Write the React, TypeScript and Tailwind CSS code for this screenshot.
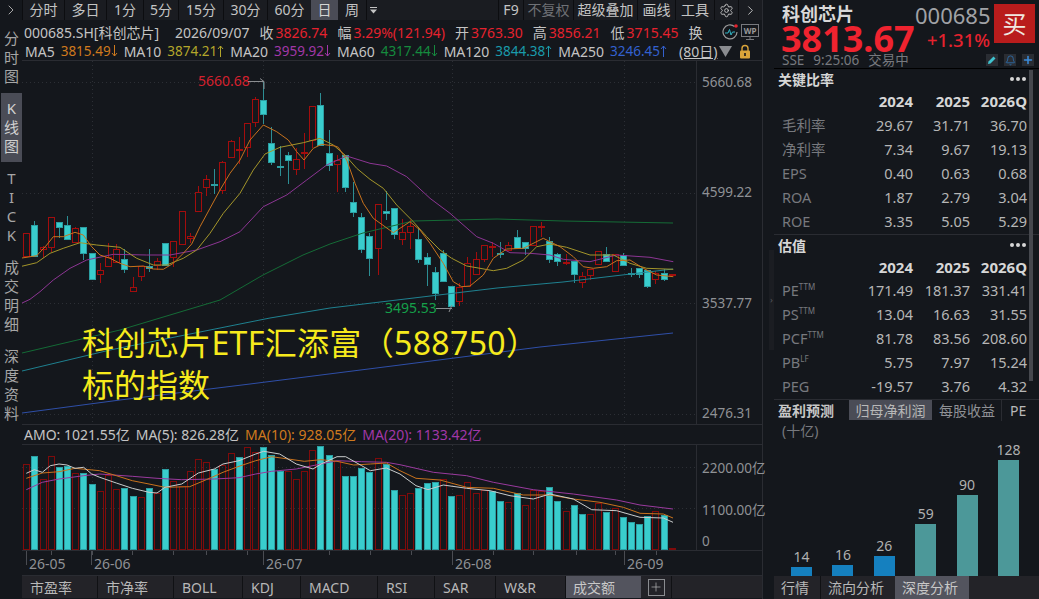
import React from 'react';
import { ChevronRight, Settings, Bell, Plus } from 'lucide-react';

type Candle = [number, number, number, number, number]; // dir (1 up / 0 down), body top, body bottom, wick top, wick bottom
type Pt = [number, number];

const candles: Candle[] = [
  [1,233,256,233,256],[0,225,256,221,256],[1,247,249,246,258],[1,217,247,217,252],[0,222,227,222,238],
  [0,225,239,216,240],[1,228,242,227,242],[0,227,253,227,260],[0,253,279,253,279],[1,270,274,263,283],
  [1,257,266,243,266],[1,249,262,244,262],[0,259,269,249,273],[1,287,291,277,291],[1,266,276,266,281],
  [0,266,268,249,272],[1,261,265,258,270],[0,243,265,243,265],[1,241,257,241,267],[1,211,244,211,244],
  [1,236,238,233,243],[1,192,211,186,211],[1,179,187,175,196],[0,184,185,169,194],[1,162,190,161,194],
  [1,141,157,140,158],[1,149,150,137,164],[1,123,147,123,157],[1,99,122,97,127],[0,100,114,81,124],
  [0,143,162,127,165],[0,166,167,146,176],[0,155,160,152,184],[1,159,169,148,175],[1,152,153,133,169],
  [1,106,140,106,148],[0,105,145,93,145],[0,153,165,130,171],[1,160,164,155,192],[0,155,187,155,192],
  [0,202,212,182,217],[0,217,249,213,253],[0,236,258,233,276],[1,204,248,204,275],[0,211,213,191,220],
  [0,208,234,208,239],[1,232,239,219,245],[1,226,232,220,249],[0,239,259,228,263],[0,257,264,253,286],
  [0,272,293,267,300],[0,253,281,250,281],[0,286,306,286,306],[1,287,301,283,306],[1,263,286,257,286],
  [1,259,274,252,274],[1,245,259,245,262],[1,246,247,242,257],[0,253,254,242,258],[1,245,250,242,250],
  [0,237,248,230,248],[0,242,248,242,255],[1,226,245,226,245],[1,226,227,222,237],[0,241,259,237,263],
  [0,254,261,253,266],[1,262,263,254,265],[0,261,274,261,283],[1,276,282,272,288],[1,269,275,269,280],
  [1,251,264,251,264],[0,254,261,247,262],[1,254,271,254,271],[0,255,265,253,266],[0,273,274,268,277],
  [0,268,274,268,278],[0,270,286,270,288],[1,273,279,271,284],[0,273,279,269,281],[1,274,275,274,275],
];

// volume bars: [dir, top y in chart]
const volumes: [number, number][] = ([
  [1,135],[0,110],[1,180],[1,110],[0,143],[0,140],[1,163],[0,162],[0,195],[1,216],[1,168],[1,210],[0,208],[0,232],[1,233],[0,208],
  [1,222],[0,150],[1,185],[1,200],[1,157],[1,120],[1,130],[0,150],[1,138],[1,102],[0,115],[1,85],[1,100],[0,84],[0,108],[0,157],
  [1,155],[1,180],[1,157],[1,94],[0,82],[0,107],[1,125],[0,172],[0,170],[0,147],[0,158],[1,118],[0,135],[0,212],[1,228],[1,222],
  [0,207],[0,193],[0,190],[1,180],[0,232],[1,228],[1,190],[1,222],[1,213],[0,215],[0,247],[1,250],[0,222],[1,257],[1,212],[1,215],
  [0,205],[0,247],[1,277],[0,259],[0,285],[1,286],[1,252],[0,279],[1,268],[0,295],[0,309],[0,315],[0,292],[1,275],[0,287],[1,386],
] as [number, number][]).map(([d, y]) => [d, 420 + y / 3]);

const cx = (i: number) => Math.round(26.3 + 8.17 * i);

// the lines were read off 3x crops, so convert back here
const conv = (pts: Pt[], ox: number, oy: number): Pt[] => pts.map(([x, y]) => [ox + x / 3, oy + y / 3]);
const toStr = (pts: Pt[]) => pts.map(([x, y]) => `${x.toFixed(1)},${y.toFixed(1)}`).join(' ');

const ma5 = [
  ...conv([[0,505],[50,497],[80,465],[100,440],[130,440],[165,427],[190,435],[215,470],[240,495],[270,505],[300,520],[330,530],[370,528],[400,537],[430,538],[460,520],[490,490],[515,462],[540,410],[570,355],[600,300],[630,250],[660,210],[690,150],[730,105],[770,125],[805,150],[830,185],[852,210],[880,175],[905,163],[945,168]], 20, 90),
  ...conv([[25,22],[50,60],[75,130],[100,190],[130,235],[190,278],[240,245],[270,270],[300,310],[340,370],[370,425],[395,440],[420,438],[460,405],[490,355],[530,327],[580,325],[640,295],[690,320],[730,350],[760,380],[790,385],[830,380],[860,362],[900,360],[940,385],[980,405],[1030,410]], 330, 140),
];
const ma10 = [
  ...conv([[0,530],[50,518],[90,490],[130,475],[180,458],[230,465],[300,472],[350,505],[400,525],[440,525],[490,505],[530,480],[570,430],[610,370],[660,310],[700,240],[735,192],[780,172],[850,158],[900,145],[940,165]], 20, 90),
  ...conv([[45,45],[80,85],[120,118],[160,145],[200,195],[250,245],[290,290],[330,330],[365,355],[410,378],[450,385],[490,392],[530,385],[580,360],[620,320],[660,312],[710,322],[780,345],[850,345],[900,370],[950,385],[1030,388]], 330, 140),
];
const ma20 = [
  ...conv([[0,642],[30,628],[60,605],[100,570],[150,535],[200,510],[280,493],[380,495],[450,495],[530,480],[600,455],[660,425],[730,350],[800,315],[860,270],[920,225],[980,198]], 20, 90),
  ...conv([[50,48],[120,70],[170,78],[230,110],[300,175],[360,220],[440,290],[490,310],[540,338],[600,340],[660,345],[700,358],[780,365],[860,345],[960,352],[1030,365]], 330, 140),
];
const ma60: Pt[] = [[22,353],[120,330],[220,300],[263,275],[303,255],[330,244],[363,233],[413,221],[497,219],[563,221],[673,223]];
const ma120: Pt[] = [[22,371],[110,350],[200,332],[270,318],[330,308],[397,300],[497,288],[563,282],[673,269]];
const ma250: Pt[] = [[22,413],[120,400],[250,384],[400,365],[540,347],[673,333]];

const volWhite = [
  ...conv([[79,163],[103,152],[127,160],[151,140],[177,135],[201,138],[225,148],[251,145],[275,165],[299,175],[349,192],[397,208],[447,220],[471,222],[495,205],[545,195],[595,162],[643,150],[669,135],[717,125],[767,105],[791,97],[839,105],[889,135],[939,150],[963,135],[1011,113],[1037,113],[1085,140],[1111,155],[1159,147]], 0, 420),
  ...conv([[0,165],[48,200],[84,212],[130,198],[200,208],[270,215],[330,230],[400,240],[450,225],[520,240],[575,272],[650,275],[720,295],[790,297],[819,310]], 400, 420),
];
const volOrange = [
  ...conv([[79,178],[127,162],[177,158],[225,148],[299,155],[349,170],[397,185],[447,195],[495,205],[569,203],[619,182],[669,160],[717,142],[767,125],[815,113],[865,120],[913,127],[963,122],[1011,127],[1061,138],[1111,135],[1159,132]], 0, 420),
  ...conv([[0,155],[48,178],[120,183],[200,205],[280,208],[370,228],[450,228],[520,240],[600,250],[670,265],[720,283],[790,285],[819,297]], 400, 420),
];
const volPurple = [
  ...conv([[79,212],[127,190],[177,180],[251,170],[299,165],[397,172],[471,178],[545,182],[643,180],[717,176],[767,165],[815,157],[889,150],[963,135],[1011,125],[1085,128],[1159,130]], 0, 420),
  ...conv([[0,137],[100,160],[200,170],[280,190],[400,212],[520,225],[650,243],[720,258],[819,270]], 400, 420),
];

const RED = '#a30d0d';
const CYAN = '#39cdcd';

const PriceChart = () => (
  <svg viewBox="22 61 675 364" width={675} height={364} className="block">
    {[82.5, 193.5, 303.5, 414.5].map((y) => (
      <line key={y} x1={22} x2={697} y1={y} y2={y} stroke="#2c2f35" strokeDasharray="1 3" />
    ))}
    {[92.5, 263.5, 452.5, 624.5].map((x) => (
      <line key={x} x1={x} x2={x} y1={61} y2={425} stroke="#2c2f35" strokeDasharray="1 3" />
    ))}
    {candles.map(([up, top, bottom, hi, lo], i) => {
      const x = cx(i) + 0.5;
      const wick = up ? RED : '#2c8e94';
      return (
        <g key={i}>
          <line x1={x} x2={x} y1={hi} y2={lo} stroke={wick} />
          {up ? (
            <rect x={x - 3} y={top + 0.5} width={6} height={bottom - top} fill="#14171c" stroke={RED} />
          ) : (
            <rect x={x - 3} y={top + 0.5} width={6} height={bottom - top} fill={CYAN} stroke="#2c9ea2" />
          )}
        </g>
      );
    })}
    <polyline points={toStr(ma250)} fill="none" stroke="#2f4fa8" />
    <polyline points={toStr(ma120)} fill="none" stroke="#1f8190" />
    <polyline points={toStr(ma60)} fill="none" stroke="#146b36" />
    <polyline points={toStr(ma20)} fill="none" stroke="#8c3593" />
    <polyline points={toStr(ma10)} fill="none" stroke="#a3952a" />
    <polyline points={toStr(ma5)} fill="none" stroke="#c8721c" />
    <path d="M248 81.5H264M260 78.5L264 81.5V89" fill="none" stroke="#8b8d90" />
    <path d="M436 308.5H452M452 305L449 312" fill="none" stroke="#8b8d90" />
  </svg>
);

const VolumeChart = () => (
  <svg viewBox="22 446 675 106" width={675} height={106} className="block">
    {[468.5, 509.5].map((y) => (
      <line key={y} x1={22} x2={697} y1={y} y2={y} stroke="#2c2f35" strokeDasharray="1 3" />
    ))}
    {[92.5, 263.5, 452.5, 624.5].map((x) => (
      <line key={x} x1={x} x2={x} y1={446} y2={552} stroke="#2c2f35" strokeDasharray="1 3" />
    ))}
    {volumes.map(([up, top], i) => {
      const x = cx(i) + 0.5;
      const y = Math.round(top) + 0.5;
      return up ? (
        <rect key={i} x={x - 3} y={y} width={6} height={550.5 - y} fill="none" stroke="#7f0b0b" />
      ) : (
        <rect key={i} x={x - 3} y={y} width={6} height={550.5 - y} fill={CYAN} stroke="#2c9ea2" />
      );
    })}
    <polyline points={toStr(volPurple)} fill="none" stroke="#9a3a9e" />
    <polyline points={toStr(volOrange)} fill="none" stroke="#c8721c" />
    <polyline points={toStr(volWhite)} fill="none" stroke="#c9cccc" />
  </svg>
);

const toolbarLeft = [
  { t: '分时', w: 'w-[42px]' },
  { t: '多日', w: 'w-[42px]' },
  { t: '1分', w: 'w-[37px]' },
  { t: '5分', w: 'w-[35px]' },
  { t: '15分', w: 'w-[45px]' },
  { t: '30分', w: 'w-[44px]' },
  { t: '60分', w: 'w-[44px]' },
];

const toolbarRight = [
  { t: 'F9', w: 'w-[25px]', c: 'text-[#c4c4c4]' },
  { t: '不复权', w: 'w-[50px]', c: 'text-[#6f7176]' },
  { t: '超级叠加', w: 'w-[64px]', c: 'text-[#c4c4c4]' },
  { t: '画线', w: 'w-[38px]', c: 'text-[#c4c4c4]' },
  { t: '工具', w: 'w-[39px]', c: 'text-[#c4c4c4]' },
];

const maRow = [
  { n: 'MA5', v: '3815.49', up: false, c: 'text-[#cf7a1e]' },
  { n: 'MA10', v: '3874.21', up: true, c: 'text-[#b3a62b]' },
  { n: 'MA20', v: '3959.92', up: false, c: 'text-[#a237a8]' },
  { n: 'MA60', v: '4317.44', up: false, c: 'text-[#158a3e]' },
  { n: 'MA120', v: '3844.38', up: true, c: 'text-[#1a9bab]' },
  { n: 'MA250', v: '3246.45', up: true, c: 'text-[#3361cf]' },
];

const quote = [
  { n: '收', v: '3826.74' },
  { n: '幅', v: '3.29%(121.94)' },
  { n: '开', v: '3763.30' },
  { n: '高', v: '3856.21' },
  { n: '低', v: '3715.45' },
];

const bottomTabs = [
  { t: '市盈率', w: 'w-[76px]' },
  { t: '市净率', w: 'w-[76px]' },
  { t: 'BOLL', w: 'w-[69px]' },
  { t: 'KDJ', w: 'w-[58px]' },
  { t: 'MACD', w: 'w-[77px]' },
  { t: 'RSI', w: 'w-[57px]' },
  { t: 'SAR', w: 'w-[61px]' },
  { t: 'W&R', w: 'w-[70px]' },
];

const ratios = [
  ['毛利率', '29.67', '31.71', '36.70'],
  ['净利率', '7.34', '9.67', '19.13'],
  ['EPS', '0.40', '0.63', '0.68'],
  ['ROA', '1.87', '2.79', '3.04'],
  ['ROE', '3.35', '5.05', '5.29'],
];

const valuation = [
  ['PE', 'TTM', '171.49', '181.37', '331.41'],
  ['PS', 'TTM', '13.04', '16.63', '31.55'],
  ['PCF', 'TTM', '81.78', '83.56', '208.60'],
  ['PB', 'LF', '5.75', '7.97', '15.24'],
  ['PEG', '', '-19.57', '3.76', '4.32'],
];

const forecast = [
  { v: 14, h: 'h-[9px]', c: 'bg-[#1580bf]' },
  { v: 16, h: 'h-[11px]', c: 'bg-[#1580bf]' },
  { v: 26, h: 'h-[20px]', c: 'bg-[#1580bf]' },
  { v: 59, h: 'h-[52px]', c: 'bg-[#4c9899]' },
  { v: 90, h: 'h-[81px]', c: 'bg-[#4c9899]' },
  { v: 128, h: 'h-[116px]', c: 'bg-[#4c9899]' },
];

const VTab = ({ chars, active }: { chars: string[]; active?: boolean }) => (
  <div className={`flex flex-col items-center py-[6px] ${active ? 'bg-[#4a4c56] text-[#d0d0d0]' : 'text-[#a6a6a6]'}`}>
    {chars.map((c, i) => (
      <span key={i} className="h-[19px] text-[15px] leading-[19px]">{c}</span>
    ))}
  </div>
);

const YearHeader = () => (
  <div className="grid h-[24px] grid-cols-[135px_57px_57px] items-center text-right text-[15px] font-bold text-[#d6d6d6]">
    <span>2024</span>
    <span>2025</span>
    <span>2026Q</span>
  </div>
);

const SectionTitle = ({ title }: { title: string }) => (
  <div className="flex h-[20px] items-center justify-between pr-[1px]">
    <span className="text-[14px] font-bold text-[#d6d6d6]">{title}</span>
    <div className="flex gap-[2px]">
      <div className="h-[4px] w-[4px] rounded-full bg-[#d6d6d6]" />
      <div className="h-[4px] w-[4px] rounded-full bg-[#d6d6d6]" />
      <div className="h-[4px] w-[4px] rounded-full bg-[#d6d6d6]" />
    </div>
  </div>
);

const Arrow = ({ up }: { up: boolean }) => (
  <svg width="7" height="12" viewBox="0 0 7 12" fill="none" stroke="currentColor" className={up ? '' : 'rotate-180'}>
    <path d="M3.5 12V1M1 4L3.5 1L6 4" />
  </svg>
);

export default function App() {
  return (
    <div className="flex h-[599px] w-[1039px] overflow-hidden bg-[#14171c] font-['Noto_Sans','Noto_Sans_CJK_SC',sans-serif] text-[14px] text-[#c4c4c4]">
      {/* vertical tabs */}
      <div className="flex w-[22px] shrink-0 flex-col">
        <div className="flex h-[20px] items-center justify-center text-[#a6a6a6]">
          <ChevronRight size={16} strokeWidth={1.5} />
        </div>
        <div className="flex flex-col gap-[1px] pt-[3px] pl-[1px]">
          <VTab chars={['分', '时', '图']} />
          <VTab chars={['K', '线', '图']} active />
          <VTab chars={['T', 'I', 'C', 'K']} />
          <VTab chars={['成', '交', '明', '细']} />
          <VTab chars={['深', '度', '资', '料']} />
        </div>
      </div>

      {/* main chart column */}
      <div className="flex w-[741px] shrink-0 flex-col border-r border-[#2a2c32]">
        <div className="flex h-[20px] items-center justify-between bg-[#1a1c21] leading-[20px]">
          <div className="flex h-full items-center">
            {toolbarLeft.map((t) => (
              <div key={t.t} className={`${t.w} h-full border-l border-[#0c0d10] text-center`}>{t.t}</div>
            ))}
            <div className="h-full w-[27px] bg-[#4a4c56] text-center text-[#d4d4d4]">日</div>
            <div className="h-full w-[28px] text-center">周</div>
            <div className="flex h-full w-[14px] items-center justify-center border-l border-[#0c0d10]">
              <svg width="7" height="7" viewBox="0 0 7 7"><path d="M0 0H7V1H0ZM0 2.5H7L3.5 6.5Z" fill="#c4c4c4" /></svg>
            </div>
          </div>
          <div className="flex h-full items-center">
            {toolbarRight.map((t) => (
              <div key={t.t} className={`${t.w} ${t.c} h-full border-l border-[#0c0d10] text-center`}>{t.t}</div>
            ))}
            <div className="flex h-full w-[24px] items-center justify-center border-l border-[#0c0d10]">
              <Settings size={15} strokeWidth={1.5} />
            </div>
            <div className="flex h-full w-[24px] items-center justify-center border-l border-[#0c0d10]">
              <ChevronRight size={15} strokeWidth={1.5} />
            </div>
          </div>
        </div>

        {/* quote line */}
        <div className="flex h-[22px] items-center whitespace-nowrap pl-[2px] pt-[2px]">
          <span>000685.SH[科创芯片]</span>
          <span className="ml-[16px]">2026/09/07</span>
          {quote.map((q) => (
            <span key={q.n} className="ml-[10px] flex gap-[2px]">
              <span>{q.n}</span>
              <span className="text-[#e5222e]">{q.v}</span>
            </span>
          ))}
          <span className="ml-[10px]">换</span>
          <div className="ml-auto mr-[3px] flex items-center gap-[2px]">
            <svg width="17" height="16" viewBox="0 0 17 16" fill="none">
              <path d="M12.5 2.5A7 7 0 1 0 15 8" stroke="#9a9a9a" strokeWidth="1.2" />
              <path d="M3 9H6L7.5 5.5L9 11L10.5 8H13" stroke="#33b5c4" strokeWidth="1" />
              <circle cx="14" cy="2" r="1.8" fill="#e5222e" />
            </svg>
            <svg width="18" height="17" viewBox="0 0 18 17" fill="none">
              <rect x="0.5" y="0.5" width="17" height="12" stroke="#77797e" />
              <text x="9" y="10" textAnchor="middle" fontSize="8" fontWeight="700" fill="#9a9a9a">WP</text>
              <path d="M5 15.5H13M9 13V15" stroke="#77797e" />
            </svg>
          </div>
        </div>

        {/* moving averages */}
        <div className="flex h-[19px] items-center gap-[6px] whitespace-nowrap border-b border-[#2a2c32] pl-[3px]">
          {maRow.map((m) => (
            <span key={m.n} className="flex items-center gap-[6px]">
              <span>{m.n}</span>
              <span className={`${m.c} flex w-[57px] items-center justify-between text-[13.5px]`}>
                {m.v}
                <Arrow up={m.up} />
              </span>
            </span>
          ))}
          <span className="ml-[6px] underline">(80日)</span>
          <svg width="13" height="11" viewBox="0 0 13 11" className="-ml-[4px]"><path d="M0 0H13L6.5 11Z" fill="#8a8c90" /></svg>
          <svg width="12" height="15" viewBox="0 0 12 15" className="ml-[1px]" fill="none">
            <path d="M3 7V4.5A3 3 0 0 1 9 4.5V7" stroke="#d9a43a" strokeWidth="1.4" />
            <rect x="1" y="6.5" width="10" height="8" rx="1" fill="#d9a43a" />
            <rect x="5.2" y="9" width="1.6" height="3" fill="#14171c" />
          </svg>
        </div>

        {/* price chart and axis */}
        <div className="flex h-[364px] shrink-0 border-b border-[#2a2c32]">
          <div className="relative w-[675px] shrink-0 border-r border-[#2a2c32]">
            <PriceChart />
            <span className="absolute left-[176px] top-[11px] text-[14px] leading-[18px] text-[#d4212e]">5660.68</span>
            <span className="absolute left-[363px] top-[238px] text-[14px] leading-[18px] text-[#14a04a]">3495.53</span>
            <div className="absolute left-[60px] top-[261px] text-[32px] leading-[42px] text-[#f6ea1c]">
              <div className="whitespace-nowrap tracking-[0.35px]">科创芯片ETF汇添富（588750）</div>
              <div>标的指数</div>
            </div>
          </div>
          <div className="flex flex-1 flex-col justify-between pb-[2px] pl-[5px] pt-[12px] text-[13.5px] leading-[18px] text-[#8f9195]">
            <span>5660.68</span>
            <span>4599.22</span>
            <span>3537.77</span>
            <span>2476.31</span>
          </div>
        </div>

        {/* AMO legend */}
        <div className="flex h-[20px] shrink-0 items-center gap-[6px] whitespace-nowrap border-b border-[#2a2c32] pl-[2px]">
          <span>AMO: 1021.55亿</span>
          <span>MA(5): 826.28亿</span>
          <span className="text-[#cf7a1e]">MA(10): 928.05亿</span>
          <span className="text-[#a237a8]">MA(20): 1133.42亿</span>
        </div>

        {/* volume chart and axis */}
        <div className="flex h-[106px] shrink-0 border-b border-[#2a2c32]">
          <div className="w-[675px] shrink-0 border-r border-[#2a2c32]">
            <VolumeChart />
          </div>
          <div className="flex flex-1 flex-col whitespace-nowrap pl-[5px] pt-[14px] text-[13.5px] leading-[18px] text-[#8f9195]">
            <span>2200.00亿</span>
            <span className="mt-[24px]">1100.00亿</span>
            <span className="mt-[13px]">0</span>
          </div>
        </div>

        {/* dates */}
        <div className="relative flex h-[24px] shrink-0 pl-[4px] text-[14px] leading-[22px] text-[#8f9195]">
          <svg className="absolute left-0 top-0" width="675" height="14">
            {[29, 70, 110, 151, 184, 225, 307, 348, 389, 471, 511, 554, 593, 634].map((x) => (
              <line key={x} x1={x + 0.5} x2={x + 0.5} y1={0} y2={4} stroke="#4a4c52" />
            ))}
          </svg>
          <div className="h-[14px] w-[65px] border-l border-[#4a4c52] pl-[2px]"><span className="block pt-[2px]">26-05</span></div>
          <div className="h-[14px] w-[172px] border-l border-[#4a4c52] pl-[2px]"><span className="block pt-[2px]">26-06</span></div>
          <div className="h-[14px] w-[189px] border-l border-[#4a4c52] pl-[2px]"><span className="block pt-[2px]">26-07</span></div>
          <div className="h-[14px] w-[172px] border-l border-[#4a4c52] pl-[2px]"><span className="block pt-[2px]">26-08</span></div>
          <div className="h-[14px] border-l border-[#4a4c52] pl-[2px]"><span className="block pt-[2px]">26-09</span></div>
        </div>

        {/* indicator tabs */}
        <div className="flex h-[23px] shrink-0 items-center border-t border-[#2a2c32] bg-[#232328] text-[#b8b8b8]">
          {bottomTabs.map((t) => (
            <div key={t.t} className={`${t.w} h-full border-r border-[#101114] pl-[8px] leading-[24px]`}>{t.t}</div>
          ))}
          <div className="h-full w-[75px] bg-[#53545e] pl-[7px] leading-[24px] text-[#c8c8c8]">成交额</div>
          <div className="flex h-full w-[31px] items-center justify-center border-r border-[#101114]">
            <div className="flex h-[17px] w-[17px] items-center justify-center border border-[#8a8c90]">
              <Plus size={14} strokeWidth={1.2} />
            </div>
          </div>
        </div>
      </div>

      {/* gutter */}
      <div className="flex w-[11px] shrink-0 items-center">
        <div className="mt-[1px] flex h-[100px] w-[5px] translate-x-[6px] items-center justify-center bg-[#1b1d22] text-[9px] text-[#55575c]">›</div>
      </div>

      {/* right panel */}
      <div className="relative flex min-w-0 flex-1 flex-col">
        <div className="flex h-[52px] shrink-0 pl-[8px] pt-[4px]">
          <div className="w-[133px]">
            <div className="text-[18px] font-bold leading-[20px] text-[#d8d8d8]">科创芯片</div>
            <div className="-ml-[1px] text-[36px] font-bold leading-[30px] text-[#f0232f]">3813.67</div>
          </div>
          <div className="w-[75px] text-right">
            <div className="text-[22px] leading-[22px] text-[#a0a2a6]">000685</div>
            <div className="mt-[2px] whitespace-nowrap text-[18.5px] font-medium leading-[24px] text-[#e5222e]">+1.31%</div>
          </div>
          <div className="ml-[4px] flex h-[39px] w-[41px] items-center justify-center bg-[#b91c1c] text-[24px] text-[#f0e8e0]">买</div>
        </div>
        <div className="flex h-[16px] shrink-0 items-center justify-between pl-[8px] pr-[5px] text-[13.5px] text-[#77797e]">
          <div className="flex gap-[9px]">
            <span>SSE</span>
            <span>9:25:06</span>
            <span>交易中</span>
          </div>
          <div className="flex gap-[6px]">
            <div className="flex h-[12px] w-[12px] items-center justify-center bg-[#2a2d33]">
              <svg width="10" height="10" viewBox="0 0 10 10"><path d="M1 9L1.5 6.5L6.5 1.5L8.5 3.5L3.5 8.5Z" fill="#3fc4d0" /></svg>
            </div>
            <div className="flex h-[12px] w-[12px] items-center justify-center bg-[#2a2d33] text-[#2d7ec9]">
              <Bell size={11} strokeWidth={1.5} />
            </div>
            <div className="flex h-[12px] w-[12px] items-center justify-center bg-[#2a2d33] text-[#3b8fe0]">
              <Plus size={12} strokeWidth={3} />
            </div>
          </div>
        </div>

        <div className="shrink-0 border-t border-[#000] pl-[4px] pr-[12px]">
          <SectionTitle title="关键比率" />
          <YearHeader />
          <div className="pt-[1px]">
            {ratios.map((r) => (
              <div key={r[0]} className="grid h-[24px] grid-cols-[74px_61px_57px_57px] items-center text-right text-[14.5px] text-[#b6b6b6]">
                <span className="pl-[4px] text-left text-[#77797e]">{r[0]}</span>
                <span>{r[1]}</span>
                <span>{r[2]}</span>
                <span>{r[3]}</span>
              </div>
            ))}
          </div>
        </div>

        <div className="shrink-0 border-t border-[#2a2c32] pl-[4px] pr-[12px]">
          <SectionTitle title="估值" />
          <YearHeader />
          {valuation.map((r) => (
            <div key={r[0]} className="grid h-[24px] grid-cols-[74px_61px_57px_57px] items-center text-right text-[14.5px] text-[#b6b6b6]">
              <span className="flex items-start pl-[4px] text-left text-[#77797e]">
                {r[0]}<span className="text-[8px] leading-[14px]">{r[1]}</span>
              </span>
              <span className="whitespace-nowrap">{r[2]}</span>
              <span className="whitespace-nowrap">{r[3]}</span>
              <span className="whitespace-nowrap">{r[4]}</span>
            </div>
          ))}
        </div>

        <div className="flex h-[21px] shrink-0 items-center whitespace-nowrap border-t border-[#2a2c32] pl-[4px] text-[#8f9195]">
          <span className="w-[71px] font-bold text-[#c8c8c8]">盈利预测</span>
          <span className="flex h-full w-[83px] items-center justify-center bg-[#4a4c56] text-[#b8b8b8]">归母净利润</span>
          <span className="w-[70px] border-r border-[#2a2c32] pl-[7px]">每股收益</span>
          <span className="pl-[8px] text-[#b8b8b8]">PE</span>
        </div>

        <div className="flex min-h-0 flex-1 flex-col justify-between">
          <span className="-mb-[4px] h-[22px] pl-[8px] leading-[22px] text-[#77797e]">(十亿)</span>
          <div className="flex items-end gap-[20.4px] pl-[17px]">
            {forecast.map((b) => (
              <div key={b.v} className="flex w-[21px] flex-col items-center">
                <span className="whitespace-nowrap text-[14px] leading-[20px] text-[#b0b0b0]">{b.v}</span>
                <div className={`${b.h} w-[21px] ${b.c}`} />
              </div>
            ))}
          </div>
        </div>

        <div className="flex h-[23px] shrink-0 items-center bg-[#232328] text-[#b8b8b8]">
          <div className="h-full w-[47px] border-r border-[#101114] pl-[7px] leading-[24px]">行情</div>
          <div className="h-full w-[74px] pl-[7px] leading-[24px]">流向分析</div>
          <div className="h-full w-[74px] bg-[#53545e] pl-[7px] leading-[24px] text-[#c8c8c8]">深度分析</div>
        </div>

        {/* scrollbar */}
        <div className="absolute left-[255px] top-[70px] h-[311px] w-[4px] bg-[#46484e]" />
      </div>
    </div>
  );
}
